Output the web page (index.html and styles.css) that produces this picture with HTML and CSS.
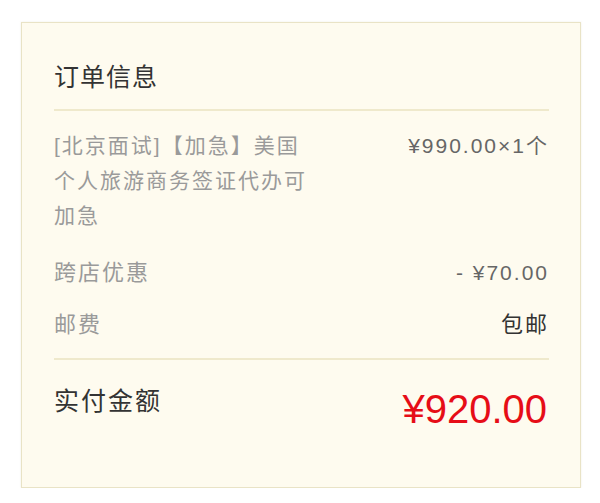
FILE: index.html
```html
<!DOCTYPE html>
<html lang="zh-CN">
<head>
<meta charset="utf-8">
<title>订单信息</title>
<link rel="stylesheet" href="styles.css">
</head>
<body>
<div class="card">
  <div class="card-head">订单信息</div>
  <div class="rows">
    <div class="row row-item">
      <div class="item-name">[北京面试]【加急】美国个人旅游商务签证代办可加急</div>
      <div class="item-price">¥990.00×1个</div>
    </div>
    <div class="row row-discount">
      <div class="label">跨店优惠</div>
      <div class="value">- ¥70.00</div>
    </div>
    <div class="row">
      <div class="label">邮费</div>
      <div class="value value-dark">包邮</div>
    </div>
  </div>
  <div class="total">
    <div class="total-label">实付金额</div>
    <div class="total-price">¥920.00</div>
  </div>
</div>
</body>
</html>
```

FILE: styles.css
```css
html, body {
  margin: 0;
  padding: 0;
  background: #ffffff;
}

body {
  font-family: "Liberation Sans", "Noto Sans CJK SC", sans-serif;
  color: #333;
}

.card {
  box-sizing: border-box;
  margin: 22px 0 0 21px;
  width: 560px;
  height: 466px;
  border: 1px solid #e9e3c6;
  background: #fefbef;
  box-shadow: 0 0 2px rgba(160, 150, 100, 0.15);
  padding: 37px 31px 0 32px;
}

.card-head {
  font-size: 25px;
  letter-spacing: 1px;
  line-height: 35px;
  color: #333;
  padding-bottom: 14px;
  border-bottom: 2px solid #efe9cc;
}

.rows {
  display: flex;
  flex-direction: column;
  padding: 17px 0 16px;
  border-bottom: 2px solid #efe9cc;
}

.row {
  display: flex;
  justify-content: space-between;
  align-items: flex-start;
  line-height: 35px;
  margin-top: 17px;
}

.row-item {
  margin-top: 0;
}

.row-discount {
  margin-top: 22px;
}

.item-name {
  width: 268px;
  font-size: 21px;
  letter-spacing: 2px;
  color: #9a9a9a;
}

.item-price {
  font-size: 21px;
  letter-spacing: 2px;
  color: #666;
  white-space: nowrap;
}

.label {
  font-size: 22px;
  letter-spacing: 2px;
  color: #9a9a9a;
}

.value {
  font-size: 21px;
  letter-spacing: 2px;
  color: #666;
}

.value-dark {
  font-size: 22px;
  color: #333;
}

.total {
  display: flex;
  justify-content: space-between;
  align-items: flex-start;
  padding-top: 24px;
}

.total-label {
  font-size: 25px;
  letter-spacing: 2px;
  line-height: 35px;
  color: #333;
}

.total-price {
  font-size: 40px;
  line-height: 50px;
  color: #e60d17;
  margin-right: 2px;
}
```
